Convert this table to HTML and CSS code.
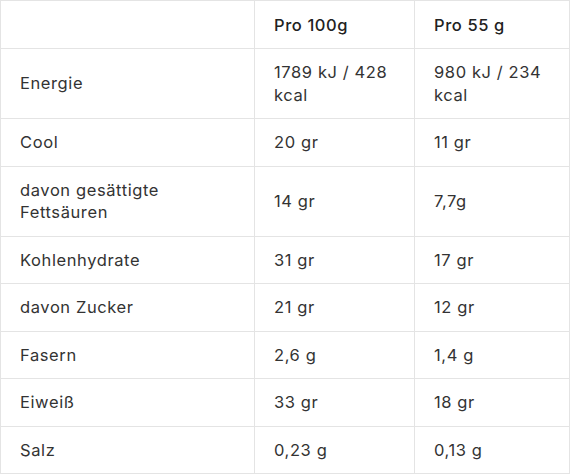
FILE: index.html
```html
<!DOCTYPE html>
<html lang="de">
<head>
<meta charset="utf-8">
<link rel="stylesheet" href="styles.css">
</head>
<body>
<table class="nutri">
  <colgroup>
    <col class="c1"><col class="c2"><col class="c3">
  </colgroup>
  <thead>
    <tr><th></th><th>Pro 100g</th><th>Pro 55 g</th></tr>
  </thead>
  <tbody>
    <tr><td>Energie</td><td>1789 kJ / 428 kcal</td><td>980 kJ / 234 kcal</td></tr>
    <tr><td>Cool</td><td>20 gr</td><td>11 gr</td></tr>
    <tr><td>davon gesättigte Fettsäuren</td><td>14 gr</td><td>7,7g</td></tr>
    <tr><td>Kohlenhydrate</td><td>31 gr</td><td>17 gr</td></tr>
    <tr><td>davon Zucker</td><td>21 gr</td><td>12 gr</td></tr>
    <tr><td>Fasern</td><td>2,6 g</td><td>1,4 g</td></tr>
    <tr><td>Eiweiß</td><td>33 gr</td><td>18 gr</td></tr>
    <tr><td>Salz</td><td>0,23 g</td><td>0,13 g</td></tr>
  </tbody>
</table>
</body>
</html>
```
FILE: styles.css
```css
html, body {
  margin: 0;
  padding: 0;
  background: #ffffff;
}
.nutri {
  border-collapse: collapse;
  table-layout: fixed;
  width: 569px;
  font-family: "Inter", "Open Sans", sans-serif;
  font-size: 16.5px;
  letter-spacing: 0.6px;
  line-height: 22.5px;
  color: #333333;
}
.c1 { width: 254px; }
.c2 { width: 160px; }
.c3 { width: 155px; }
.nutri th, .nutri td {
  border: 1px solid #e4e4e4;
  padding: 12px 19px;
  text-align: left;
  vertical-align: middle;
}
.nutri th {
  padding-top: 12.5px;
  font-weight: 500;
  color: #222222;
}
```
